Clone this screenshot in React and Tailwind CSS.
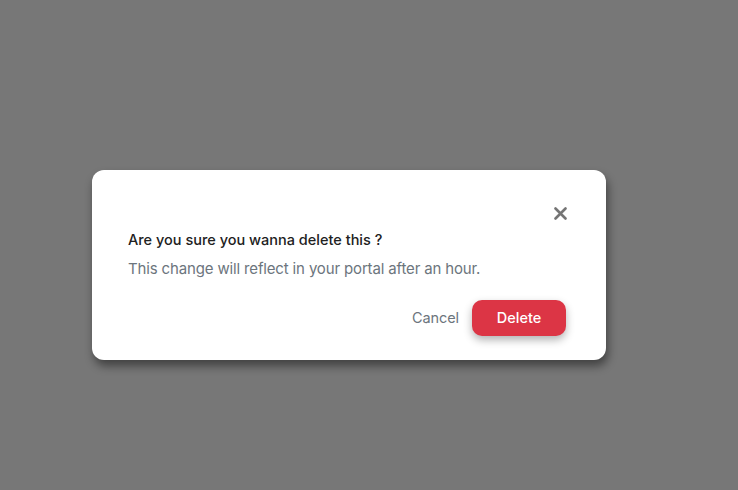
import React from "react";

export default function App() {
  return (
    <div
      className="w-[738px] h-[490px] bg-[#777777] pt-[170px] pl-[92px]"
      style={{ fontFamily: 'Inter, "Noto Sans", sans-serif' }}
    >
      <div className="w-[514px] h-[190px] bg-white rounded-[12px] shadow-[2px_6px_10px_rgba(0,0,0,0.45)] flex flex-col pl-[36px] pr-[39px] pt-[37px]">
        <div className="flex justify-end h-[13px]">
          <svg width="13" height="13" viewBox="0 0 13 13" className="block">
            <path d="M1.5 1.5 L11.5 11.5 M11.5 1.5 L1.5 11.5" stroke="#757575" strokeWidth="2.6" strokeLinecap="round" />
          </svg>
        </div>
        <div className="mt-[10px] text-[14.5px] leading-[20px] font-medium text-[#212121]">
          Are you sure you wanna delete this ?
        </div>
        <div className="mt-[9px] text-[15px] leading-[20px] text-[#6c757d] tracking-[-0.15px]">
          This change will reflect in your portal after an hour.
        </div>
        <div className="mt-[21px] flex justify-end items-center gap-[13px] pr-[1px]">
          <button className="text-[14.5px] text-[#6c757d] leading-[20px] tracking-[-0.1px]">Cancel</button>
          <button className="w-[94px] h-[36px] rounded-[10px] bg-[#dc3545] text-white text-[14.5px] font-medium shadow-[0_4px_8px_rgba(0,0,0,0.3)]">
            Delete
          </button>
        </div>
      </div>
    </div>
  );
}
